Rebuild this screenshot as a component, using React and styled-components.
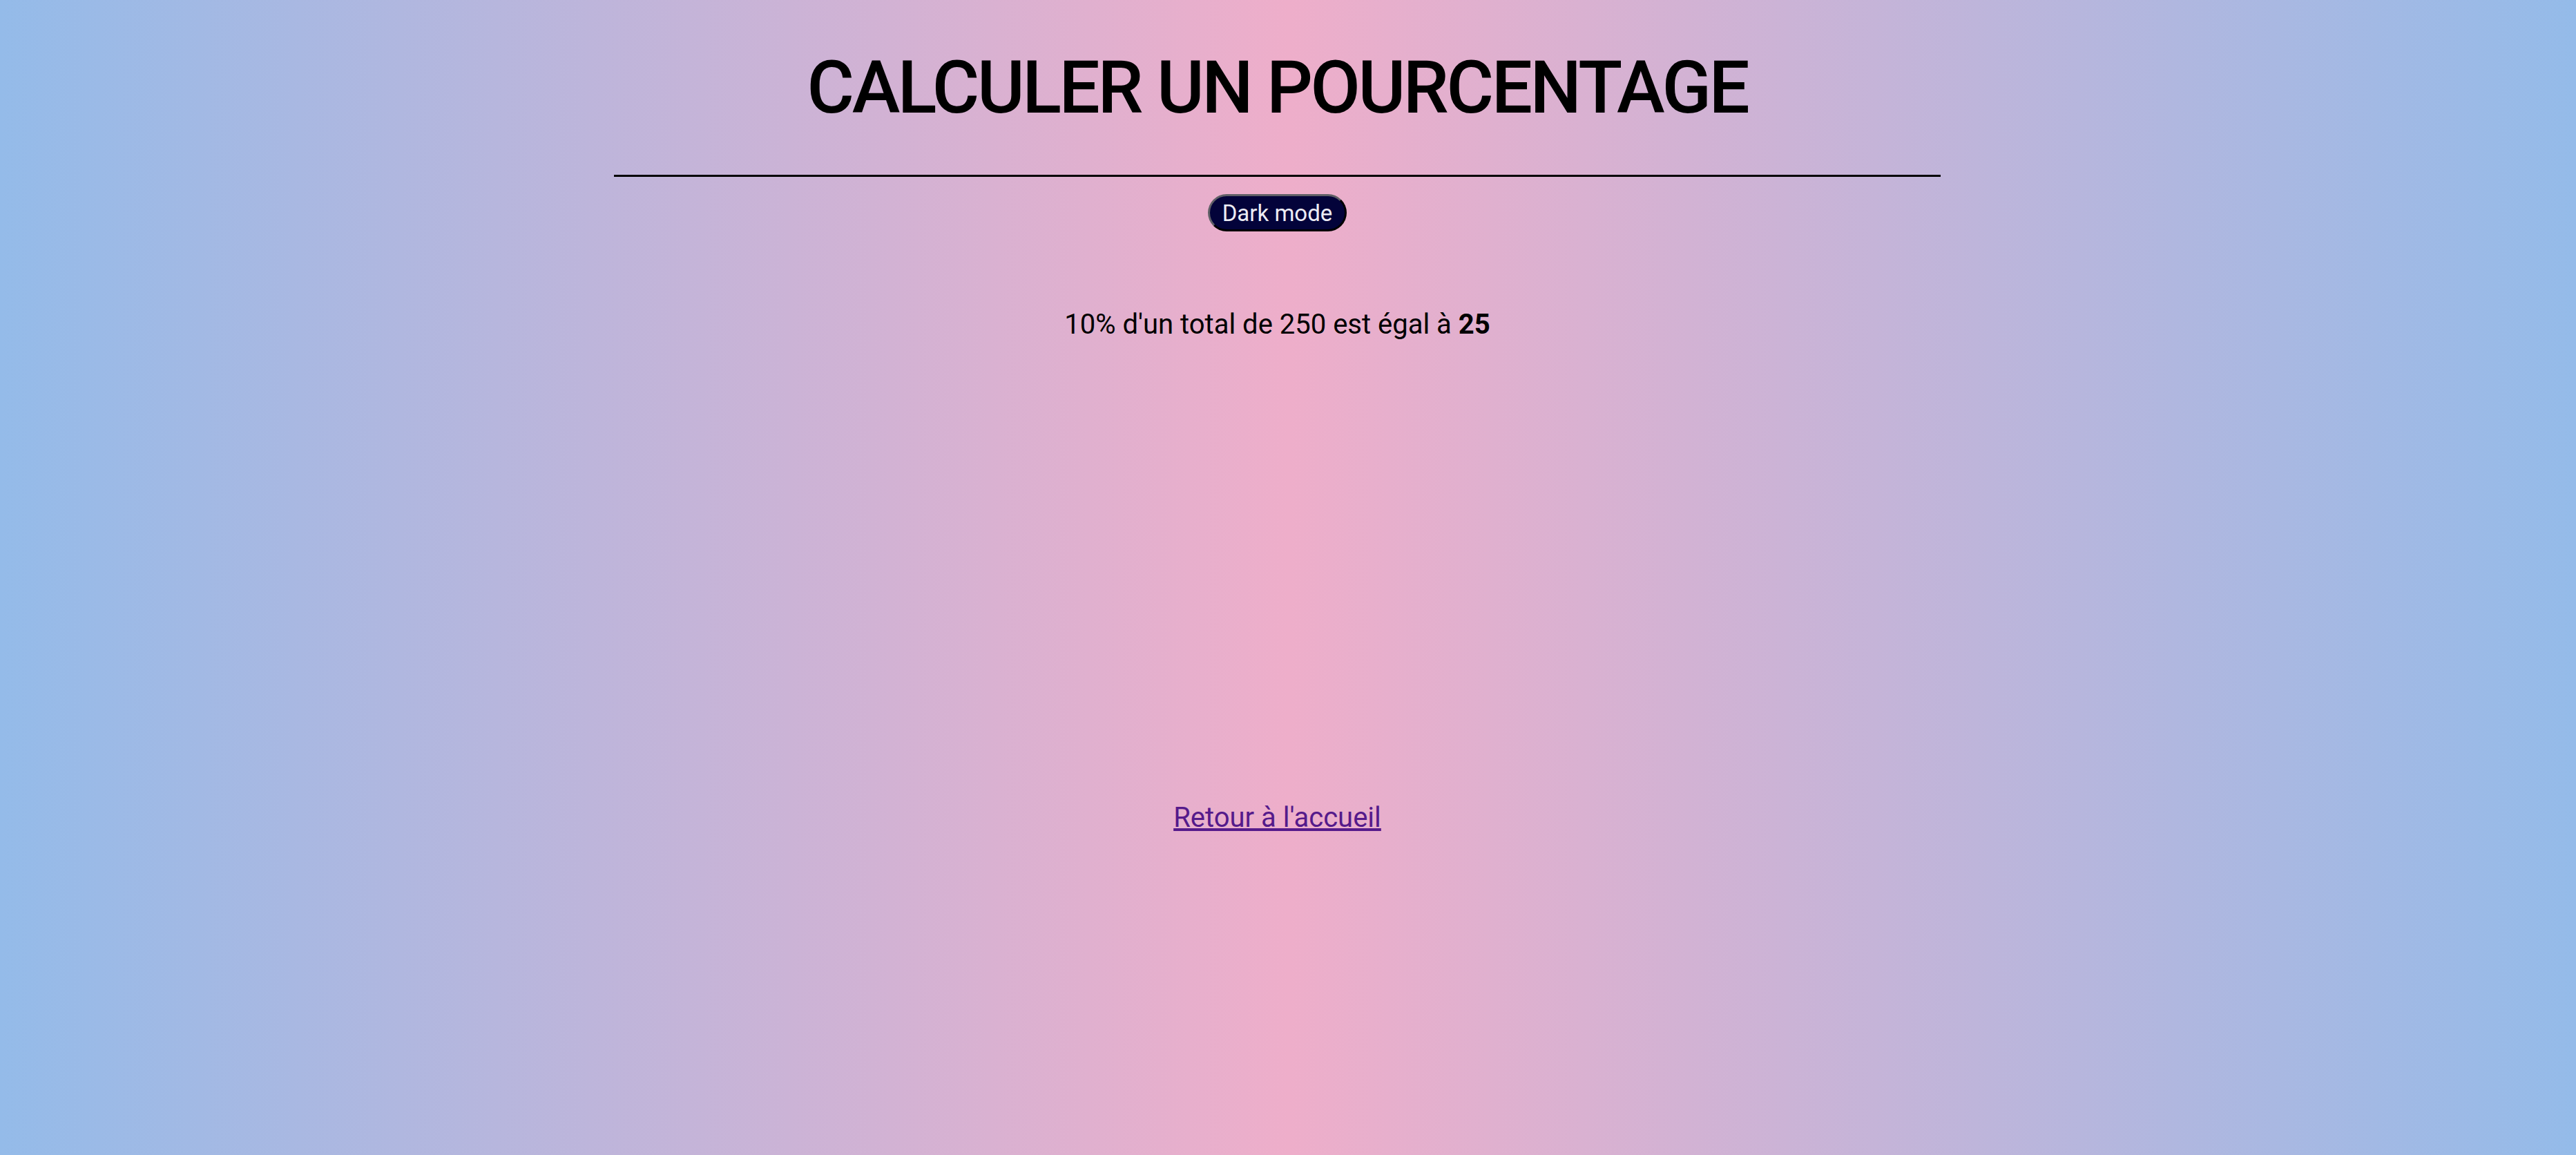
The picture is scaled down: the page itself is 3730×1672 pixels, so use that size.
import React from "react";
import styled, { createGlobalStyle } from "styled-components";

const GlobalStyle = createGlobalStyle`
    html, body {
        margin: 0;
        padding: 0;
    }

    body {
        font-family: Roboto, "Liberation Sans", Arial, sans-serif;
        color: #000000;
    }
`;

const Page = styled.div`
    min-height: 100vh;
    box-sizing: border-box;
    padding-right: 31px;
    display: flex;
    flex-direction: column;
    align-items: center;
    background: linear-gradient(90deg, rgb(148, 187, 233) 0%, rgb(238, 174, 202) 50%, rgb(148, 187, 233) 100%);
`;

const Title = styled.h1`
    margin: 66px 0 0;
    font-size: 105px;
    font-weight: 500;
    letter-spacing: -3.4px;
    line-height: normal;
    text-transform: uppercase;
`;

const Divider = styled.hr`
    width: 1921px;
    margin: 64px 0 0;
    border: none;
    border-top: 3px solid #000000;
`;

const ModeButton = styled.button`
    margin-top: 25px;
    height: 54px;
    padding: 0 18px;
    font-family: inherit;
    font-size: 33px;
    color: #ececf4;
    background: #03033a;
    border: 3px solid;
    border-color: #5f5f66 #000000 #000000 #5f5f66;
    border-radius: 27px;
    cursor: pointer;
`;

const Result = styled.p`
    margin: 111px 0 0;
    font-size: 40px;
    line-height: normal;

    strong {
        font-weight: 700;
    }
`;

const HomeLink = styled.a`
    margin-top: 667px;
    font-size: 40px;
    line-height: normal;
    color: #551a8b;
    text-decoration: underline;
`;

const App = () => (
    <>
        <GlobalStyle />
        <Page>
            <Title>Calculer un pourcentage</Title>
            <Divider />
            <ModeButton type="button">Dark mode</ModeButton>
            <Result>10% d'un total de 250 est égal à <strong>25</strong></Result>
            <HomeLink href="#">Retour à l'accueil</HomeLink>
        </Page>
    </>
);

export default App;
